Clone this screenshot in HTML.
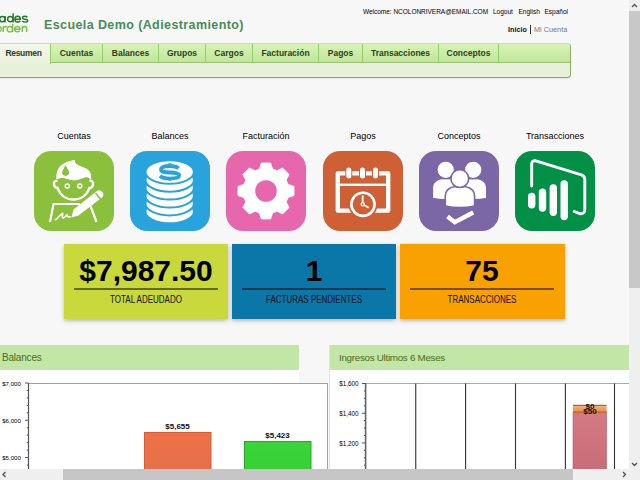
<!DOCTYPE html>
<html><head><meta charset="utf-8">
<style>
*{margin:0;padding:0;box-sizing:border-box}
html,body{width:640px;height:480px;overflow:hidden;background:#f7f7f7;font-family:"Liberation Sans",sans-serif;position:relative}
.abs{position:absolute}
#logo1{left:-1px;top:11.5px;font-size:12.5px;color:#1f7a2c;line-height:12px;white-space:nowrap;letter-spacing:0.3px}
#logo2{left:-5px;top:21.5px;font-size:12.5px;color:#76c442;line-height:12px;white-space:nowrap}
#title{left:44px;top:17.5px;font-size:12.5px;font-weight:bold;color:#488c58;white-space:nowrap;letter-spacing:0.4px}
.wl{top:7.5px;font-size:6.5px;color:#000;white-space:nowrap;line-height:8px}
#nav2{top:25px;font-size:7.2px;font-weight:bold;color:#111;white-space:nowrap;line-height:9px}
#nav3{top:25px;font-size:7.3px;color:#7a7a7a;white-space:nowrap;line-height:9px}
#nav2 span.sep{display:inline-block;width:1px;height:11px;background:#333;vertical-align:-2px;margin:0 2px}
#nav2 .mc{color:#999}
#tabbar{left:0;top:43px;width:571px;height:35px;border:1px solid #86b062;border-top-color:#c2e4a4;border-left:none;box-shadow:0 1px 1px rgba(0,0,0,0.08);border-radius:0 4px 4px 0;background:#e9f0da;overflow:hidden}
#tabs{position:absolute;left:0;top:0;height:19px;width:570px;background:linear-gradient(#d9f3b8,#c0e69a);border-bottom:1px solid #9cc274}
.tab{position:absolute;top:0;height:19px;border-right:1px solid #94d068;font-size:8.5px;font-weight:bold;color:#2e3e1e;text-align:center;line-height:18px;white-space:nowrap}
.tab.act{background:linear-gradient(#f3faec,#e9f0da);height:20px;color:#2e3a26;letter-spacing:-0.3px;padding-right:3px}
.lbl{position:absolute;top:130.5px;width:80px;text-align:center;font-size:9px;color:#000;white-space:nowrap}
.ico{position:absolute;top:151px;width:80px;height:80px;border-radius:17px;overflow:hidden}
.ico svg{display:block}
.sum{position:absolute;top:244px;width:164px;height:75px;box-shadow:0 2px 4px rgba(0,0,0,0.25)}
.sum .v{position:absolute;left:0;top:12px;width:164px;text-align:center;font-size:30px;font-weight:bold;color:#000;line-height:30px}
.sum .ln{position:absolute;left:10px;top:288px;width:144px;height:2px;background:rgba(0,0,0,0.5)}
.sum .t{position:absolute;left:0;top:50.5px;width:164px;text-align:center;font-size:10px;color:#111;line-height:10px;transform:scaleX(0.8)}
.panel{position:absolute;top:345px;height:124px;background:#fff}
.phead{position:absolute;left:0;top:0;height:25px;width:100%;background:#c2e6a6;font-size:9.5px;color:#4f6a1e;line-height:25px;padding-left:3px;white-space:nowrap}
.axl{position:absolute;font-size:7px;color:#111;white-space:nowrap;text-align:right;width:40px;line-height:8px}
/* scrollbars */
#vsb{left:629px;top:0;width:11px;height:469px;background:#efefef}
#vthumb{left:629px;top:11px;width:11px;height:277px;background:#c8c8c8}
#hsb{left:0;top:469px;width:640px;height:11px;background:#efefef}
#hthumb{left:63px;top:469px;width:510px;height:11px;background:#c6c6c6}
</style></head><body>

<svg class="abs" style="left:0;top:0" width="40" height="40" viewBox="0 0 40 40">
<g fill="none" stroke="#1f7a2c" stroke-width="1.45">
<circle cx="2.3" cy="19.1" r="2.7"/><path d="M5.1 16 L5.1 22.4"/>
<circle cx="10.3" cy="19.1" r="2.7"/><path d="M13.1 13.3 L13.1 22.4"/>
<path d="M14.9 19.2 L20.4 19.2 C20.4 17.4 19.3 16.2 17.6 16.2 C16 16.2 14.9 17.5 14.9 19.2 C14.9 20.9 16.1 22 17.6 22 C18.7 22 19.6 21.5 20.2 20.7"/>
<path d="M27.4 17.2 C26.8 16.5 25.8 16.2 24.8 16.2 C23.4 16.2 22.5 16.9 22.5 17.9 C22.5 19 23.7 19.1 25 19.3 C26.5 19.5 27.7 19.8 27.7 20.8 C27.7 21.7 26.6 22.1 25.2 22.1 C24 22.1 22.9 21.8 22.2 21"/>
</g>
<g fill="none" stroke="#76c442" stroke-width="1.4">
<circle cx="-1.3" cy="29.2" r="2.6"/>
<path d="M3.2 32 L3.2 26.3 M3.2 29 C3.2 27.3 4.6 26.5 6.9 26.5"/>
<circle cx="9.9" cy="29.2" r="2.7"/><path d="M12.7 23.8 L12.7 32"/>
<path d="M14.7 29.3 L20.1 29.3 C20.1 27.6 19.1 26.5 17.4 26.5 C15.8 26.5 14.7 27.8 14.7 29.3 C14.7 30.9 15.9 31.9 17.4 31.9 C18.4 31.9 19.3 31.4 19.9 30.7"/>
<path d="M22.3 32 L22.3 26.3 M22.3 28.9 C22.3 27.4 23.5 26.5 24.6 26.5 C25.8 26.5 26.7 27.4 26.7 28.9 L26.7 32"/>
</g>
</svg>
<div class="abs" id="title">Escuela Demo (Adiestramiento)</div>
<div class="abs wl" style="left:363px;letter-spacing:-0.02px">Welcome: NCOLONRIVERA@EMAIL.COM</div><div class="abs wl" style="left:493px">Logout</div><div class="abs wl" style="left:518.5px">English</div><div class="abs wl" style="left:544.5px">Español</div>
<div class="abs" id="nav2" style="left:508px">Inicio</div><div class="abs" style="left:529.5px;top:25px;width:1px;height:9px;background:#333"></div><div class="abs" id="nav3" style="left:534px">Mi Cuenta</div>

<div class="abs" id="tabbar">
 <div id="tabs">
  <div class="tab act" style="left:0;width:51px">Resumen</div>
  <div class="tab" style="left:51px;width:52px">Cuentas</div>
  <div class="tab" style="left:103px;width:56px">Balances</div>
  <div class="tab" style="left:159px;width:47px">Grupos</div>
  <div class="tab" style="left:206px;width:47px">Cargos</div>
  <div class="tab" style="left:253px;width:66px">Facturación</div>
  <div class="tab" style="left:319px;width:44px">Pagos</div>
  <div class="tab" style="left:363px;width:76px">Transacciones</div>
  <div class="tab" style="left:439px;width:60px">Conceptos</div>
 </div>
</div>

<!-- icon labels -->
<div class="lbl" style="left:34px">Cuentas</div>
<div class="lbl" style="left:130px">Balances</div>
<div class="lbl" style="left:226px">Facturación</div>
<div class="lbl" style="left:323px">Pagos</div>
<div class="lbl" style="left:419px">Conceptos</div>
<div class="lbl" style="left:515px">Transacciones</div>

<!-- ICONS -->
<div class="ico" style="left:34px;background:#8bc03c">
<svg width="80" height="80" viewBox="0 0 80 80">
<g fill="#fff">
<path d="M22.3 28.5 C22 22 24 17 27 14.6 C29.5 12.2 33 10.5 37 9.8 C38.5 9.5 40 9.2 40.7 9 C41 10.5 41.5 12 42.5 13 C44 14.5 47 15.3 50 16.5 C54 18 56.5 20.5 57 24 L57.3 29 C55.5 27 54 26.3 53 26.3 C50 26.3 48 28.4 43 28.9 C40 29.3 38 29.4 35 28.5 C32 27.6 30 27 28.3 27 C26.5 27 25 27.5 22.3 28.5 Z"/>
</g>
<path d="M31.5 13.9 C30 17 28 20 28 21.8 C28 23.6 29.6 24.9 31.6 24.9 C33.6 24.9 35.2 23.6 35.2 21.8 C35.2 20 33 17 31.5 13.9 Z" fill="#8bc03c"/>
<path d="M23.5 30 C21 29.5 19.5 31 20 33.5 C20.5 36 22 37 23.5 36.8 C26 44 32 48.5 39.5 48.5 C47 48.5 53 44 55.5 36.8 C57 37 58.5 36 59 33.5 C59.5 31 58 29.5 55.5 30" fill="none" stroke="#fff" stroke-width="2.4"/>
<circle cx="33.3" cy="35" r="2" fill="none" stroke="#fff" stroke-width="1.4"/>
<circle cx="45.8" cy="35" r="2" fill="none" stroke="#fff" stroke-width="1.4"/>
<path d="M16 71 L19.5 53 L46 53 M56.5 55 L62.5 71" fill="none" stroke="#fff" stroke-width="2.2"/>
<path d="M37.5 66.5 L39.5 58.5 L63 40 Q66 38 68.5 41 Q70.5 44 68 46.5 L44.5 64.5 Z" fill="#fff"/>
<path d="M61.5 42 L66.5 48" stroke="#8bc03c" stroke-width="1.6"/>
<path d="M21 69 C24 67 26 64 28.5 62.5 C29 65 27.5 67 29.5 67 C31 66.5 32 64.5 33 64 C33.5 66 34.5 66.5 37 65.5" fill="none" stroke="#fff" stroke-width="1.6"/>
</svg>
</div>
<div class="ico" style="left:130px;background:#29a3dc">
<svg width="80" height="80" viewBox="0 0 80 80">
<g fill="#fff" stroke="#29a3dc" stroke-width="2">
<ellipse cx="39.7" cy="60.50" rx="24.2" ry="11.8"/>
<ellipse cx="39.7" cy="52.60" rx="24.2" ry="11.8"/>
<ellipse cx="39.7" cy="44.70" rx="24.2" ry="11.8"/>
<ellipse cx="39.7" cy="36.80" rx="24.2" ry="11.8"/>
<ellipse cx="39.7" cy="28.90" rx="24.2" ry="11.8"/>
<ellipse cx="39.7" cy="21.00" rx="24.2" ry="11.8"/>
</g>
<path d="M48.6 17.4 C46.5 15.6 43.5 15 39.8 15 C34.5 15 31 16.2 31 18.6 C31 21 34.5 21.3 39.8 21.5 C45.5 21.7 49.2 22.2 49.2 24.6 C49.2 27 45.5 27.6 39.8 27.6 C35.5 27.6 32 26.9 30 24.9" fill="none" stroke="#29a3dc" stroke-width="3.8"/>
<path d="M39.8 12.2 L39.8 16.5 M39.8 26 L39.8 29.6" stroke="#29a3dc" stroke-width="2.8"/>
</svg>
</div>
<div class="ico" style="left:226px;background:#e767ad">
<svg width="80" height="80" viewBox="0 0 80 80">
<path d="M33.40 17.97 L35.40 11.98 L44.60 11.98 L46.60 17.97 L50.91 19.75 L56.56 16.93 L63.07 23.44 L60.25 29.09 L62.03 33.40 L68.02 35.40 L68.02 44.60 L62.03 46.60 L60.25 50.91 L63.07 56.56 L56.56 63.07 L50.91 60.25 L46.60 62.03 L44.60 68.02 L35.40 68.02 L33.40 62.03 L29.09 60.25 L23.44 63.07 L16.93 56.56 L19.75 50.91 L17.97 46.60 L11.98 44.60 L11.98 35.40 L17.97 33.40 L19.75 29.09 L16.93 23.44 L23.44 16.93 L29.09 19.75 Z" fill="#fff" stroke="#fff" stroke-width="0.8" stroke-linejoin="round"/>
<circle cx="40" cy="40" r="10.8" fill="#e767ad"/>
</svg>
</div>
<div class="ico" style="left:323px;background:#cf5f34">
<svg width="80" height="80" viewBox="0 0 80 80">
<path d="M14.8 22.4 L14.8 59.6 L65.2 59.6 L65.2 22.4 Z" fill="none" stroke="#fff" stroke-width="4.4" stroke-linejoin="round"/>
<rect x="14" y="32.6" width="52" height="2.4" fill="#fff"/>
<rect x="22.3" y="18" width="7" height="8" fill="#cf5f34"/>
<rect x="36" y="18" width="7" height="8" fill="#cf5f34"/>
<rect x="49" y="18" width="7" height="8" fill="#cf5f34"/>
<g fill="#fff"><rect x="23.3" y="16.5" width="5" height="11" rx="2.5"/><rect x="37" y="16.5" width="5" height="11" rx="2.5"/><rect x="50" y="16.5" width="5" height="11" rx="2.5"/></g>
<circle cx="40" cy="53.3" r="14.6" fill="#cf5f34"/>
<circle cx="40" cy="53.3" r="11.6" fill="none" stroke="#fff" stroke-width="2.6"/>
<path d="M39.7 44.5 L39.7 53.3 L45.8 56.8" fill="none" stroke="#fff" stroke-width="1.8"/>
<circle cx="39.7" cy="53.3" r="1.6" fill="#cf5f34" stroke="#fff" stroke-width="1.2"/>
</svg>
</div>
<div class="ico" style="left:419px;background:#7b67a5">
<svg width="80" height="80" viewBox="0 0 80 80">
<g fill="#fff" stroke="#7b67a5" stroke-width="1.6">
<path d="M13.3 47.5 L13.3 37.5 C13.3 30.5 18.5 27.2 26.7 27.2 C35 27.2 40.5 30.5 40.5 37.5 L40.5 47.5 C31 49.2 22 49.2 13.3 47.5 Z"/>
<circle cx="26.7" cy="18.8" r="8.9"/>
<path d="M41 47.5 L41 37.5 C41 30.5 46 27.2 54.2 27.2 C62.5 27.2 67.8 30.5 67.8 37.5 L67.8 47.5 C59 49.2 50 49.2 41 47.5 Z"/>
<circle cx="54.2" cy="18.8" r="8.9"/>
<path d="M26.3 55 L26.3 45.5 C26.3 38.5 31.5 35.2 40.8 35.2 C50 35.2 55.6 38.5 55.6 45.5 L55.6 55 C46 57.2 36 57.2 26.3 55 Z"/>
<circle cx="40.8" cy="27.6" r="8.9"/>
</g>
<path d="M28.5 65.5 L35.8 71.2 L54.2 61.5" fill="none" stroke="#fff" stroke-width="4.4"/>
</svg>
</div>
<div class="ico" style="left:515px;background:#028f46">
<svg width="80" height="80" viewBox="0 0 80 80">
<path d="M16.7 35 L16.7 13 Q16.7 9.2 20.8 9.8 L66.5 23.8 Q69.8 25 69.8 28.5 L69.8 58.5 Q69.8 63 65.5 62.8 L59.2 60.5" fill="none" stroke="#fff" stroke-width="2.9" stroke-linecap="round" stroke-linejoin="round"/>
<g stroke="#fff" stroke-width="7.4" stroke-linecap="round">
<line x1="16.7" y1="45.5" x2="16.7" y2="53.8"/>
<line x1="27.5" y1="41.3" x2="27.5" y2="57"/>
<line x1="38.3" y1="37" x2="38.3" y2="61.3"/>
<line x1="49.2" y1="33" x2="49.2" y2="65.5"/>
</g>
</svg>
</div>

<!-- SUMMARY -->
<div class="sum" style="left:64px;background:#c9d83a"><div class="v">$7,987.50</div><div class="ln" style="top:44px"></div><div class="t">TOTAL ADEUDADO</div></div>
<div class="sum" style="left:232px;background:#0a77a8"><div class="v">1</div><div class="ln" style="top:44px"></div><div class="t">FACTURAS PENDIENTES</div></div>
<div class="sum" style="left:400px;width:165px;background:#f8a100"><div class="v">75</div><div class="ln" style="top:44px"></div><div class="t">TRANSACCIONES</div></div>

<!-- PANELS -->
<div class="panel" style="left:0;width:299px"><div class="phead" style="padding-left:2px;font-size:10px;letter-spacing:-0.2px">Balances</div></div>
<div class="panel" style="left:329px;width:300px;border-left:1px solid #e2e2e2"><div class="phead" style="padding-left:9px;font-size:9.8px;letter-spacing:-0.28px">Ingresos Ultimos 6 Meses</div></div>


<svg class="abs" style="left:0;top:0" width="640" height="480" viewBox="0 0 640 480">
<defs>
<linearGradient id="go" x1="0" y1="0" x2="0" y2="1"><stop offset="0" stop-color="#f07048"/><stop offset="1" stop-color="#e0704e"/></linearGradient>
<linearGradient id="gg" x1="0" y1="0" x2="0" y2="1"><stop offset="0" stop-color="#3ad43a"/><stop offset="1" stop-color="#33cc33"/></linearGradient>
<linearGradient id="gor" x1="0" y1="0" x2="0" y2="1"><stop offset="0" stop-color="#f6b27c"/><stop offset="1" stop-color="#e8884a"/></linearGradient>
<linearGradient id="gp" x1="0" y1="0" x2="0" y2="1"><stop offset="0" stop-color="#d47a84"/><stop offset="1" stop-color="#c66a76"/></linearGradient>
</defs>
<!-- left chart box -->
<rect x="28.5" y="383.5" width="299" height="100" fill="#fff" stroke="#a0a0a0" stroke-width="1"/>
<line x1="28.5" y1="383" x2="28.5" y2="480" stroke="#555" stroke-width="1.2"/>
<g stroke="#555" stroke-width="1">
<line x1="25" y1="383.00" x2="28.5" y2="383.00"/>
<line x1="26.8" y1="390.46" x2="28.5" y2="390.46"/>
<line x1="26.8" y1="397.92" x2="28.5" y2="397.92"/>
<line x1="26.8" y1="405.38" x2="28.5" y2="405.38"/>
<line x1="26.8" y1="412.84" x2="28.5" y2="412.84"/>
<line x1="25" y1="420.30" x2="28.5" y2="420.30"/>
<line x1="26.8" y1="427.76" x2="28.5" y2="427.76"/>
<line x1="26.8" y1="435.22" x2="28.5" y2="435.22"/>
<line x1="26.8" y1="442.68" x2="28.5" y2="442.68"/>
<line x1="26.8" y1="450.14" x2="28.5" y2="450.14"/>
<line x1="25" y1="457.60" x2="28.5" y2="457.60"/>
<line x1="26.8" y1="465.06" x2="28.5" y2="465.06"/>
</g>
<g font-family="Liberation Sans" font-size="6.1" fill="#000" text-anchor="end">
<text x="20.8" y="386.1">$7,000</text>
<text x="20.8" y="423.3">$6,000</text>
<text x="20.8" y="459.6">$5,000</text>
</g>
<rect x="144.5" y="432.5" width="66.5" height="60" fill="url(#go)" stroke="#d55d35" stroke-width="1"/>
<rect x="244.5" y="441.5" width="66.5" height="60" fill="url(#gg)" stroke="#2aa82a" stroke-width="1"/>
<g font-family="Liberation Sans" font-size="8" font-weight="bold" fill="#111" text-anchor="middle">
<text x="177.5" y="429.3">$5,655</text>
<text x="277.5" y="438.3">$5,423</text>
</g>
<!-- right chart -->
<line x1="366" y1="383.5" x2="629" y2="383.5" stroke="#a8a8a8" stroke-width="1"/>
<line x1="365.6" y1="383" x2="365.6" y2="480" stroke="#666" stroke-width="1.6"/>
<g stroke="#555" stroke-width="1">
<line x1="362" y1="383.50" x2="366" y2="383.50"/>
<line x1="364" y1="390.93" x2="366" y2="390.93"/>
<line x1="364" y1="398.35" x2="366" y2="398.35"/>
<line x1="364" y1="405.77" x2="366" y2="405.77"/>
<line x1="362" y1="413.20" x2="366" y2="413.20"/>
<line x1="364" y1="420.62" x2="366" y2="420.62"/>
<line x1="364" y1="428.05" x2="366" y2="428.05"/>
<line x1="364" y1="435.48" x2="366" y2="435.48"/>
<line x1="362" y1="442.90" x2="366" y2="442.90"/>
<line x1="364" y1="450.32" x2="366" y2="450.32"/>
<line x1="364" y1="457.75" x2="366" y2="457.75"/>
<line x1="364" y1="465.18" x2="366" y2="465.18"/>
</g>
<g stroke="#333" stroke-width="1.1">
<line x1="415.75" y1="383.5" x2="415.75" y2="480"/>
<line x1="465.6" y1="383.5" x2="465.6" y2="480"/>
<line x1="515.5" y1="383.5" x2="515.5" y2="480"/>
<line x1="565.4" y1="383.5" x2="565.4" y2="480"/>
<line x1="614.5" y1="383.5" x2="614.5" y2="480"/>
</g>
<g font-family="Liberation Sans" font-size="6.3" fill="#000" text-anchor="end">
<text x="358.5" y="386.2">$1,600</text>
<text x="358.5" y="416">$1,400</text>
<text x="358.5" y="445.7">$1,200</text>
</g>
<rect x="573" y="412.5" width="33.6" height="70" fill="url(#gp)" stroke="#b86070" stroke-width="0.6"/>
<rect x="573" y="405.5" width="33.6" height="7" fill="url(#gor)"/>
<rect x="573" y="411.5" width="33.6" height="1.2" fill="#c06020"/>
<rect x="573" y="404.8" width="33.6" height="1" fill="#3c6e3c"/>
<g font-family="Liberation Sans" font-size="8" font-weight="bold" fill="#111" text-anchor="middle">
<text x="590" y="409">$0</text>
<text x="590" y="413.5">$50</text>
</g>
</svg>
<!-- scrollbars -->
<div class="abs" id="vsb"></div>
<div class="abs" id="vthumb"></div>
<div class="abs" id="hsb"></div>
<div class="abs" id="hthumb"></div>

<svg class="abs" style="left:0;top:0" width="640" height="480" viewBox="0 0 640 480">
<g fill="none" stroke="#505050" stroke-width="1.3">
<path d="M632 7 L634.5 4.5 L637 7"/>
<path d="M632 463 L634.5 465.5 L637 463"/>
<path d="M5.5 472 L3 474.5 L5.5 477"/>
<path d="M623 472 L625.5 474.5 L623 477"/>
</g>
</svg>
</body></html>
